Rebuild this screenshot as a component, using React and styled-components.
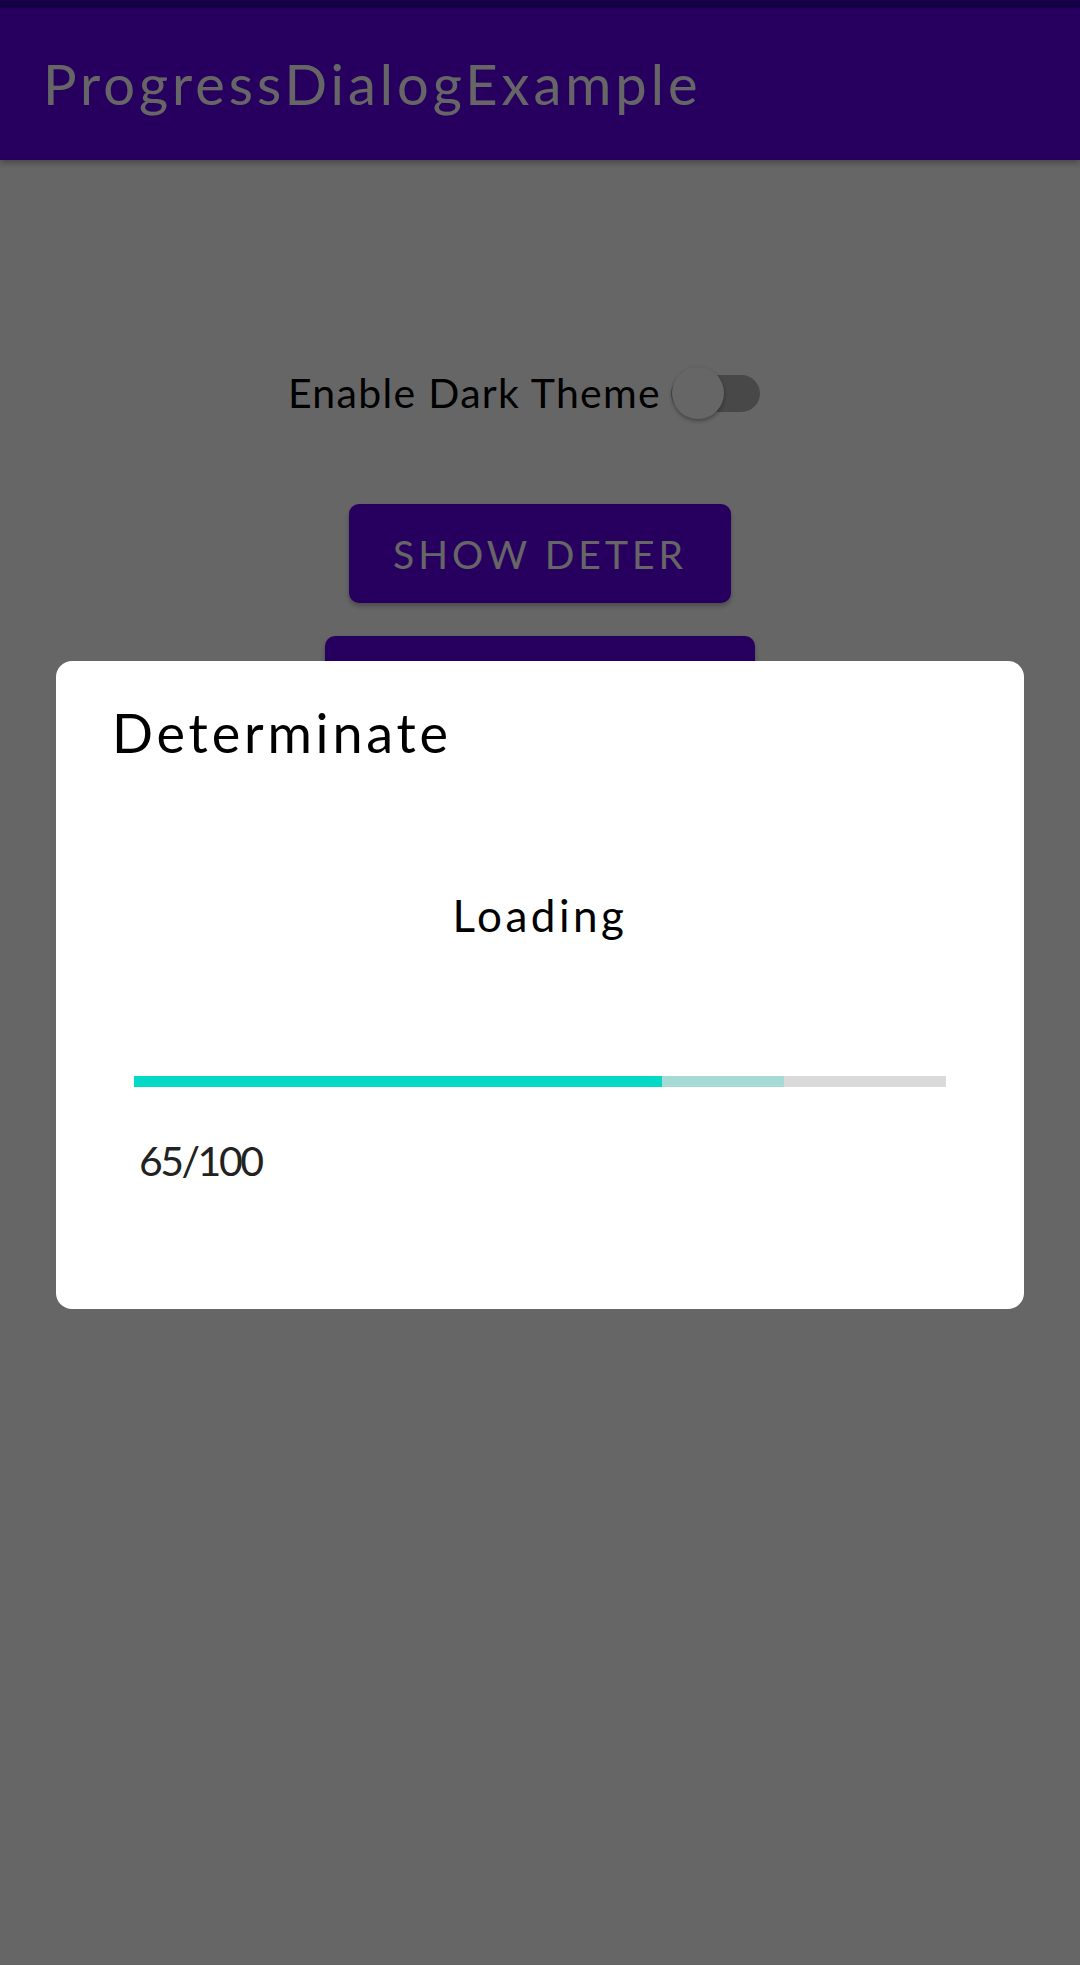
import React from "react";
import styled, { createGlobalStyle } from "styled-components";

const GlobalStyle = createGlobalStyle`
  html, body {
    margin: 0;
    padding: 0;
    background: #ffffff;
  }
  body {
    font-family: Lato, "Open Sans", sans-serif;
    -webkit-font-smoothing: antialiased;
  }
`;

const Screen = styled.div`
  min-height: 1965px;
  background: #ffffff;
  display: flex;
  flex-direction: column;
`;

const StatusBar = styled.div`
  height: 8px;
  background: #3700b3;
`;

const AppBar = styled.header`
  height: 152px;
  background: #6200ee;
  display: flex;
  align-items: center;
  padding-left: 43px;
  box-shadow: 0 3px 6px rgba(0, 0, 0, 0.3);
`;

const AppTitle = styled.h1`
  margin: 0;
  font-size: 56px;
  line-height: 1.2;
  font-weight: 400;
  color: #ffffff;
  letter-spacing: 4px;
`;

const Content = styled.main`
  display: flex;
  flex-direction: column;
  align-items: center;
  padding-top: 203px;
`;

const ThemeRow = styled.div`
  display: flex;
  align-items: center;
  height: 60px;
`;

const RowLabel = styled.span`
  font-size: 41px;
  line-height: 1.2;
  color: #000000;
  letter-spacing: 1.3px;
`;

const SwitchBox = styled.div`
  position: relative;
  width: 131px;
  height: 60px;
  display: flex;
  align-items: center;
`;

const SwitchTrack = styled.div`
  margin-left: 10px;
  width: 89px;
  height: 37px;
  border-radius: 19px;
  background: ${(p) => (p.$on ? "#b69cf7" : "#b5b5b5")};
`;

const SwitchThumb = styled.div`
  position: absolute;
  left: ${(p) => (p.$on ? "48px" : "11px")};
  top: 4px;
  width: 52px;
  height: 52px;
  border-radius: 50%;
  background: ${(p) => (p.$on ? "#6200ee" : "#ffffff")};
  box-shadow: 0 2px 4px rgba(0, 0, 0, 0.35);
`;

const ActionButton = styled.button`
  margin-top: ${(p) => p.$gap}px;
  width: ${(p) => p.$width}px;
  height: 99px;
  border: none;
  border-radius: 10px;
  background: #6200ee;
  color: #ffffff;
  font-family: Lato, "Open Sans", sans-serif;
  font-size: 39px;
  letter-spacing: 4px;
  text-transform: uppercase;
  box-shadow: 0 3px 5px rgba(0, 0, 0, 0.28);
  cursor: pointer;
`;

const Scrim = styled.div`
  position: fixed;
  inset: 0;
  background: rgba(0, 0, 0, 0.6);
  display: flex;
  align-items: center;
  justify-content: center;
  padding: 5px 56px 0;
`;

const Dialog = styled.div`
  width: 100%;
  background: #ffffff;
  border-radius: 16px;
  padding: 40px 78px 124px;
  box-sizing: border-box;
  display: flex;
  flex-direction: column;
`;

const DialogTitle = styled.h2`
  margin: 0 0 0 -22px;
  font-size: 54px;
  line-height: 1.2;
  font-weight: 400;
  color: #000000;
  letter-spacing: 3.8px;
`;

const Message = styled.div`
  margin-top: 124px;
  text-align: center;
  font-size: 44px;
  line-height: 1.2;
  color: #000000;
  letter-spacing: 3.5px;
`;

const Track = styled.div`
  position: relative;
  margin-top: 134px;
  height: 11px;
  background: #dadada;
  overflow: hidden;
`;

const Fill = styled.div`
  position: absolute;
  left: 0;
  top: 0;
  bottom: 0;
  background: ${(p) => p.$color};
`;

const Count = styled.div`
  margin-top: 49px;
  margin-left: 5px;
  font-size: 41px;
  line-height: 1.2;
  color: #222222;
  letter-spacing: -2.5px;
`;

const progress = { value: 65, secondary: 80, max: 100 };

export default function App() {
  const pct = (progress.value / progress.max) * 100;
  const secPct = (progress.secondary / progress.max) * 100;

  return (
    <>
      <GlobalStyle />
      <Screen>
        <StatusBar />
        <AppBar>
          <AppTitle>ProgressDialogExample</AppTitle>
        </AppBar>
        <Content>
          <ThemeRow>
            <RowLabel>Enable Dark Theme</RowLabel>
            <SwitchBox>
              <SwitchTrack $on={false} />
              <SwitchThumb $on={false} />
            </SwitchBox>
          </ThemeRow>
          <ActionButton $gap={81} $width={382}>Show Deter</ActionButton>
          <ActionButton $gap={33} $width={430}>Show Indeter</ActionButton>
        </Content>
      </Screen>

      <Scrim>
        <Dialog>
          <DialogTitle>Determinate</DialogTitle>
          <Message>Loading</Message>
          <Track>
            <Fill $color="#a6dad5" style={{ width: `${secPct}%` }} />
            <Fill $color="#03dac5" style={{ width: `${pct}%` }} />
          </Track>
          <Count>
            {progress.value}/{progress.max}
          </Count>
        </Dialog>
      </Scrim>
    </>
  );
}
